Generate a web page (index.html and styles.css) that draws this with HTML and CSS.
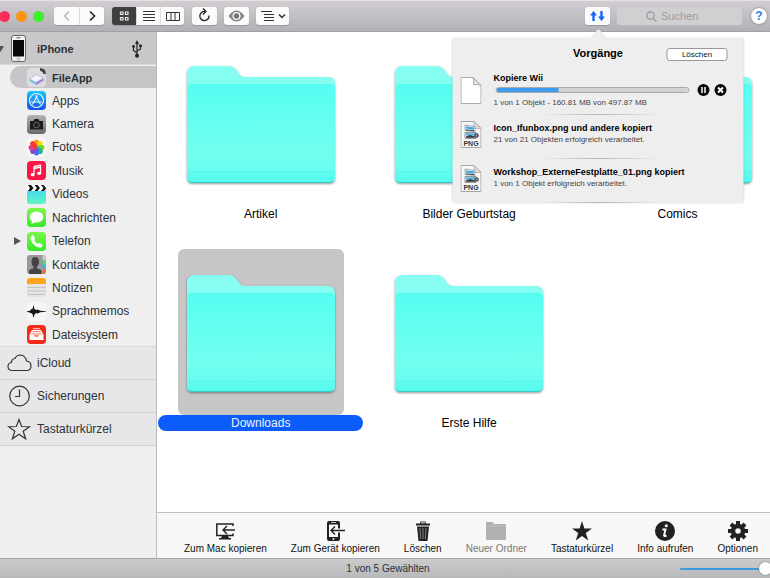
FILE: index.html
```html
<!DOCTYPE html>
<html lang="de">
<head>
<meta charset="utf-8">
<title>iPhone – FileApp</title>
<link rel="stylesheet" href="styles.css">
</head>
<body>
<svg class="defs" aria-hidden="true">
  <defs>
    <linearGradient id="front" x1="0" y1="0" x2="0" y2="1">
      <stop offset="0" stop-color="#55fdf0"/><stop offset=".12" stop-color="#5bfff2"/>
      <stop offset=".7" stop-color="#72fff0"/><stop offset=".88" stop-color="#66fdf0"/><stop offset="1" stop-color="#50fbee"/>
    </linearGradient>
    <linearGradient id="blue" x1="0" y1="0" x2="0" y2="1"><stop offset="0" stop-color="#18c8f8"/><stop offset="1" stop-color="#1650f0"/></linearGradient>
    <linearGradient id="gray" x1="0" y1="0" x2="0" y2="1"><stop offset="0" stop-color="#b4b4b6"/><stop offset="1" stop-color="#69696c"/></linearGradient>
    <linearGradient id="green" x1="0" y1="0" x2="0" y2="1"><stop offset="0" stop-color="#7cf84c"/><stop offset="1" stop-color="#35e828"/></linearGradient>
    <linearGradient id="aqua" x1="0" y1="0" x2="0" y2="1"><stop offset="0" stop-color="#45dcf0"/><stop offset="1" stop-color="#62f5c0"/></linearGradient>
    <symbol id="folder" viewBox="0 0 148 117">
      <path fill="#86fff2" d="M0 8Q0 0 8 0H42Q47 0 50 5L53 9Q55 11 58 11H141Q148 11 148 18V110Q148 117 142 117H6Q0 117 0 111Z"/>
      <path fill="url(#front)" d="M0 23Q0 18 5 18H143Q148 18 148 23V111Q148 117 142 117H6Q0 117 0 111Z"/>
      <path stroke="#48eee2" stroke-opacity=".5" d="M1 106.5H147"/>
      <path stroke="#38c8c2" fill="none" d="M2 115Q3 116.500 6 116.500H142Q145 116.500 146 115"/>
    </symbol>
    <symbol id="png" viewBox="0 0 21 27">
      <path fill="#f8f8f8" stroke="#a5a5a5" d="M.5.5H13.500L20.500 7.500V26.500H.5Z"/>
      <path fill="#ddd" stroke="#a5a5a5" stroke-width=".7" d="M13.500.5V7.500H20.500Z"/>
      <path fill="#e6f0f6" stroke="#777" stroke-width=".6" d="M4.500 4L14.500 5.500V10.500L4.500 9.500Z"/>
      <path fill="#3f9fe0" d="M5.500 5.500l8 1v2l-8-1z"/>
      <path fill="#274654" d="M5.500 8.500l8 .5v1l-8-.5z"/>
      <path fill="#e6eff4" stroke="#555" stroke-width=".6" d="M4.500 11.500H15.500V17.500H4.500Z"/>
      <path fill="#53aee4" d="M5.500 12.300h9v2.200h-9z"/><path fill="#303a3e" d="M5.500 15.500l4-1.500 5 1.500v1.200h-9z"/>
      <circle cx="16" cy="14.500" r="2.300" fill="#4a4a4a"/><circle cx="16" cy="14.500" r=".9" fill="#aaa"/>
      <text x="10.500" y="25" text-anchor="middle" class="png-tag">PNG</text>
    </symbol>
  </defs>
</svg>

<div class="window">
  <header class="toolbar">
    <div class="lights">
      <button class="light red" aria-label="Schließen"></button>
      <button class="light orange" aria-label="Minimieren"></button>
      <button class="light green" aria-label="Vergrößern"></button>
    </div>
    <div class="group nav">
      <button class="tool" aria-label="Zurück"><svg width="24" height="18" fill="none" stroke="#b5b5b8" stroke-width="1.400"><path d="M14 4.500L9.500 9L14 13.500"/></svg></button>
      <button class="tool" aria-label="Vor"><svg width="24" height="18" fill="none" stroke="#222" stroke-width="1.600"><path d="M10 4.500L14.500 9L10 13.500"/></svg></button>
    </div>
    <div class="group views">
      <button class="tool active" aria-label="Symbole"><svg width="24" height="18" fill="none" stroke="#e8e8e8" stroke-width="1.200"><path d="M8.500 5h2.500v2.500H8.500zM13.500 5H16v2.500H13.500zM8.500 10.500h2.500V13H8.500zM13.500 10.500H16V13H13.500z"/></svg></button>
      <button class="tool" aria-label="Liste"><svg width="24" height="18" stroke="#333"><path d="M6 4.500H18M6 7.500H18M6 10.500H18M6 13.500H18"/></svg></button>
      <button class="tool" aria-label="Spalten"><svg width="24" height="18" fill="none" stroke="#333"><path d="M5.500 5.500H18.500V13.500H5.500ZM10 5.500V13.500M14 5.500V13.500"/></svg></button>
    </div>
    <button class="tool single" aria-label="Neu laden"><svg width="25" height="18" fill="none" stroke="#222" stroke-width="1.300"><path d="M13 4.500A4.600 4.600 0 1 0 17 8.500M11 1.500L14 4.500L11 7.500"/></svg></button>
    <button class="tool single" aria-label="Vorschau"><svg width="25" height="18"><path fill="#858588" d="M4.500 9Q8.500 3.500 12.500 3.500T20.500 9Q16.500 14.500 12.500 14.500T4.500 9Z"/><circle cx="12.500" cy="9" r="4" fill="#fbfbfc"/><circle cx="12.500" cy="9" r="2.700" fill="#77777a"/></svg></button>
    <button class="tool single arrange" aria-label="Anordnen"><svg width="33" height="18" fill="none" stroke="#333"><path d="M5 4.500H16M8 7.500H18M8 10.500H18M8 13.500H18"/><path stroke-width="1.500" d="M23 7.500L26 10.500L29 7.500"/></svg></button>
    <div class="transfers">
      <button class="tool single" aria-label="Vorgänge" aria-expanded="true"><svg width="25" height="18" fill="#1768f2"><path d="M8.500 4L12 8.500H9.700V14H7.300V8.500H5ZM16.500 14L13 9.500H15.300V4H17.700V9.500H20Z"/></svg></button>
      <section class="popover" aria-label="Vorgänge">
        <div class="popover-head">
          <h2>Vorgänge</h2>
          <button class="clear">Löschen</button>
        </div>
        <ul class="tasks">
          <li class="task">
            <svg class="doc" viewBox="0 0 21 27"><path fill="#fff" stroke="#aaa" d="M.5.5H12.500L20.500 8.500V26.500H.5Z"/><path fill="#e5e5e5" stroke="#aaa" d="M12.500.5Q14 4 13 7.500Q17 7 20.500 8.500Z"/></svg>
            <div class="task-text">
              <h3>Kopiere Wii</h3>
              <div class="bar">
                <progress max="497.870" value="160.810" aria-label="Kopiere Wii"></progress>
                <button class="round" aria-label="Anhalten"><svg viewBox="0 0 12 12" stroke="#fff" stroke-width="1.500"><path d="M4.500 3V9M7.500 3V9"/></svg></button>
                <button class="round" aria-label="Abbrechen"><svg viewBox="0 0 12 12" stroke="#fff" stroke-width="2"><path d="M3.500 3.500L8.500 8.500M8.500 3.500L3.500 8.500"/></svg></button>
              </div>
              <p>1 von 1 Objekt - 160.81 MB von 497.87 MB</p>
            </div>
          </li>
          <li class="task">
            <svg class="doc"><use href="#png"/></svg>
            <div class="task-text"><h3>Icon_Ifunbox.png und andere kopiert</h3><p>21 von 21 Objekten erfolgreich verarbeitet.</p></div>
          </li>
          <li class="task">
            <svg class="doc"><use href="#png"/></svg>
            <div class="task-text"><h3>Workshop_ExterneFestplatte_01.png kopiert</h3><p>1 von 1 Objekt erfolgreich verarbeitet.</p></div>
          </li>
        </ul>
      </section>
    </div>
    <label class="search">
      <svg width="11" height="11" fill="none" stroke="#98979b" stroke-width="1.200"><circle cx="4.500" cy="4.500" r="3.700"/><path d="M7.300 7.300L10.500 10.500"/></svg>
      <input type="search" placeholder="Suchen" aria-label="Suchen">
    </label>
    <button class="help" aria-label="Hilfe">?</button>
  </header>

  <div class="body">
    <nav class="sidebar">
      <a class="device" href="#iphone">
        <svg class="caret" width="4" height="6" fill="#555"><path d="M-3 0H4L.5 6Z"/></svg>
        <svg class="phone" width="15" height="27"><rect x=".5" y=".5" width="14" height="26" rx="2.500" fill="#f4f4f4" stroke="#666"/><path fill="#0a0a0a" d="M2 5H13V21.500H2Z"/><path stroke="#555" d="M5.500 2.800H9.500"/><circle cx="7.500" cy="24" r="1.400" fill="#fff" stroke="#888" stroke-width=".7"/></svg>
        <span>iPhone</span>
        <svg class="usb" width="10" height="18" fill="none" stroke="#222" stroke-width="1.200"><path d="M5 3V15M5 13L1.500 10.500V7M5 11L8.500 9V6"/><path fill="#222" stroke="none" d="M5 0L7 4H3ZM7.200 4.500H9.800V7H7.200Z"/><circle cx="1.500" cy="6.500" r="1.400" fill="#222" stroke="none"/><circle cx="5" cy="15.800" r="2" fill="#222" stroke="none"/></svg>
      </a>
      <ul class="apps">
        <li><a class="current" href="#fileapp"><svg class="icon" viewBox="0 0 19 19"><rect width="19" height="19" rx="4" fill="#dedbdd"/><path fill="#74c4ec" d="M2.500 10.500L9 14.500V17L2.500 13Z"/><path fill="#9a7edc" d="M9 14.500L16.500 10V12.500L9 17Z"/><path fill="#f5f2fb" stroke="#9bb4e4" stroke-width=".7" d="M2.500 10.500L9.500 6.500L16.500 10L9 14.500Z"/><path fill="#444" d="M13 0Q19 0 19 6H16.500L15.500 4L13 2.500Z"/></svg>FileApp</a></li>
        <li><a href="#apps"><svg class="icon" viewBox="0 0 19 19"><rect width="19" height="19" rx="4" fill="url(#blue)"/><g fill="none" stroke="#e6f7ff" stroke-width="1.200"><circle cx="9.500" cy="9.500" r="7"/><path d="M10.300 4.500L5.500 13.500M8.700 4.500L13.500 13.500M4 11H15"/></g></svg>Apps</a></li>
        <li><a href="#kamera"><svg class="icon" viewBox="0 0 19 19"><rect width="19" height="19" rx="4" fill="url(#gray)"/><path fill="#1c1c1e" d="M3 6H6.500L7.500 4H11.500L12.500 6H16V14.500H3Z"/><circle cx="9.500" cy="10" r="2.800" fill="none" stroke="#77777a" stroke-width=".8"/></svg>Kamera</a></li>
        <li><a href="#fotos"><svg class="icon" viewBox="0 0 19 19"><rect width="19" height="19" rx="4" fill="#f7f7f7"/><rect x="7" y="1.500" width="5" height="8" rx="2.500" fill="#ff9c12"/><rect x="7" y="1.500" width="5" height="8" rx="2.500" fill="#f0dc10" transform="rotate(45 9.500 9.500)"/><rect x="7" y="1.500" width="5" height="8" rx="2.500" fill="#7cd418" transform="rotate(90 9.500 9.500)"/><rect x="7" y="1.500" width="5" height="8" rx="2.500" fill="#20b890" transform="rotate(135 9.500 9.500)"/><rect x="7" y="1.500" width="5" height="8" rx="2.500" fill="#3478e8" transform="rotate(180 9.500 9.500)"/><rect x="7" y="1.500" width="5" height="8" rx="2.500" fill="#8a48c8" transform="rotate(225 9.500 9.500)"/><rect x="7" y="1.500" width="5" height="8" rx="2.500" fill="#e03888" transform="rotate(270 9.500 9.500)"/><rect x="7" y="1.500" width="5" height="8" rx="2.500" fill="#f8382c" transform="rotate(315 9.500 9.500)"/></svg>Fotos</a></li>
        <li><a href="#musik"><svg class="icon" viewBox="0 0 19 19"><rect width="19" height="19" rx="4" fill="#fb1647"/><path fill="none" stroke="#fff" stroke-width="1.300" d="M7 13.500V5.500L13.500 4V12M7 7.500L13.500 6"/><ellipse cx="5.600" cy="13.700" rx="2" ry="1.600" fill="#fff"/><ellipse cx="12.100" cy="12.300" rx="2" ry="1.600" fill="#fff"/></svg>Musik</a></li>
        <li><a href="#videos"><svg class="icon" viewBox="0 0 19 19"><path fill="url(#aqua)" d="M0 6H19V16Q19 19 16 19H3Q0 19 0 16Z"/><path fill="#fff" d="M0 3Q0 0 3 0H16Q19 0 19 3V6H0Z"/><path fill="#111" d="M1 0H4L6.500 3L4 6H1L3 3ZM7.500 0H10.500L13 3L10.500 6H7.500L10 3ZM14 0H16.500L19 3V4L17 6H14L16.500 3Z"/></svg>Videos</a></li>
        <li><a href="#nachrichten"><svg class="icon" viewBox="0 0 19 19"><rect width="19" height="19" rx="4" fill="url(#green)"/><ellipse cx="9.500" cy="9" rx="6.800" ry="5.600" fill="#fff"/><path fill="#fff" d="M5 12L4.500 16L9 14Z"/></svg>Nachrichten</a></li>
        <li><a href="#telefon"><svg class="expand" width="7" height="8" fill="#555"><path d="M0 0L7 4L0 8Z"/></svg><svg class="icon" viewBox="0 0 19 19"><rect width="19" height="19" rx="4" fill="url(#green)"/><path fill="#fff" d="M5 3.500Q6 2.800 6.800 4L8 6Q8.300 7 7 7.800Q7.500 10 11 12Q12 10.800 13 11.200L15.300 12.800Q16 13.500 15 14.700Q13 16.500 9.500 14.500Q4.500 11.500 3.500 7Q3.200 4.600 5 3.500Z"/></svg>Telefon</a></li>
        <li><a href="#kontakte"><svg class="icon" viewBox="0 0 19 19"><rect width="19" height="19" rx="3" fill="#98989b"/><path fill="#c8c8c8" d="M15.500 0H16Q19 0 19 3V5H15.500Z"/><path fill="#58d86c" d="M15.500 5H19V9.500H15.500Z"/><path fill="#38b8e8" d="M15.500 9.500H19V14H15.500Z"/><path fill="#f07438" d="M15.500 14H19V16Q19 19 16 19H15.500Z"/><path fill="#434345" d="M8 2Q12 2 12 7Q12 10 10 11.500V13.500Q14.500 14.500 14.500 16V19H2V16Q2 14.500 6.500 13.500V11.500Q4.500 10 4.500 7Q4.500 2 8 2Z"/></svg>Kontakte</a></li>
        <li><a href="#notizen"><svg class="icon" viewBox="0 0 19 19"><rect width="19" height="19" rx="3" fill="#e4e4e4"/><path fill="#fca41c" d="M0 6V3Q0 0 3 0H16Q19 0 19 3V6Z"/><path stroke="#c4c4c6" d="M0 9.500H19M0 13H19M1 16.500H18"/></svg>Notizen</a></li>
        <li><a href="#sprachmemos"><svg class="icon" viewBox="0 0 19 19"><rect width="19" height="19" rx="4" fill="#f6f6f6"/><path fill="#151515" d="M0 9.200L3 8.800L4.500 7L5.500 7L6.500 3L7.500 7L9 8L11 7.500L13 8.800L19 9.200V9.800L13 10.200L11 11.500L9 11L7.500 12.500L6.500 16L5.500 12L4 11L0 9.800Z"/></svg>Sprachmemos</a></li>
        <li><a href="#dateisystem"><svg class="icon" viewBox="0 0 19 19"><rect width="19" height="19" rx="4" fill="#f32b18"/><path fill="#fff" d="M5 5H14L16.500 10V15H2.500V10Z"/><path fill="#f58a78" d="M5.700 6H13.300L15.200 10H12Q11.500 12.200 9.500 12.200T7 10H3.800Z"/><path stroke="#fff" stroke-width=".8" d="M5 7.500H14M4.500 9H14.500M6 3.700H13"/></svg>Dateisystem</a></li>
      </ul>
      <ul class="sections">
        <li><a href="#icloud"><svg width="25" height="18" fill="none" stroke="#333" stroke-width="1.200"><path d="M5.500 16.500Q1 16.500 1 12.500Q1 9 4.500 8.500Q4.500 5 8 4.500Q9.500 1 13.500 1Q18.500 1.500 19.500 7Q24 7.500 24 12Q24 16.500 19.500 16.500Z"/></svg>iCloud</a></li>
        <li><a href="#sicherungen"><svg width="25" height="22" fill="none" stroke="#333" stroke-width="1.200"><circle cx="12.500" cy="11" r="9.800"/><path d="M12.500 4.500V11.500H8"/></svg>Sicherungen</a></li>
        <li><a href="#kuerzel"><svg width="25" height="22" fill="none" stroke="#333" stroke-width="1.200"><path d="M12 1.500L14.600 8.500L22.500 8.700L16.200 13.300L18.600 20.800L12 16.300L5.400 20.800L7.800 13.300L1.500 8.700L9.400 8.500Z"/></svg>Tastaturkürzel</a></li>
      </ul>
    </nav>

    <main class="content">
      <ul class="files">
        <li class="file"><span class="tile"><svg><use href="#folder"/></svg></span><span class="name">Artikel</span></li>
        <li class="file"><span class="tile"><svg><use href="#folder"/></svg></span><span class="name">Bilder Geburtstag</span></li>
        <li class="file"><span class="tile"><svg><use href="#folder"/></svg></span><span class="name">Comics</span></li>
        <li class="file selected"><span class="tile"><svg><use href="#folder"/></svg></span><span class="name">Downloads</span></li>
        <li class="file"><span class="tile"><svg><use href="#folder"/></svg></span><span class="name">Erste Hilfe</span></li>
      </ul>
      <div class="actions">
        <button class="action"><svg viewBox="0 0 20 20"><path fill="none" stroke="#222" stroke-width="1.500" d="M18 5V3H1.800V14.500H18V12.500"/><path fill="#222" d="M7 15H13L14 17H16V18.500H4V17H6Z"/><path fill="none" stroke="#222" stroke-width="1.400" d="M20 9H8M12 5L8 9L12 13"/></svg>Zum Mac kopieren</button>
        <button class="action"><svg viewBox="0 0 20 20"><path fill="#222" fill-rule="evenodd" d="M4 0H13Q15 0 15 2V7.500H13V3.500H4V16H13V11.500H15V18Q15 20 13 20H4Q2 20 2 18V2Q2 0 4 0ZM6 1.300V2H11V1.300ZM8.500 17A1 1 0 1 0 8.500 19A1 1 0 1 0 8.500 17Z"/><path fill="none" stroke="#222" stroke-width="1.400" d="M20 9.500H6M10 5.500L6 9.500L10 13.500"/></svg>Zum Gerät kopieren</button>
        <button class="action"><svg viewBox="0 0 20 20"><path fill="#222" d="M3 2.500H7L7.500.5H12.500L13 2.500H17V4.500H3ZM4 5.500H16L14.500 20H5.500Z"/><path stroke="#999" stroke-width=".8" d="M7 7L7.600 18M10 7V18M13 7L12.400 18"/><path stroke="#eee" d="M8 1.800H12"/></svg>Löschen</button>
        <button class="action" disabled><svg viewBox="0 0 20 20"><path fill="#b0b0b0" d="M0 2Q0 1 1 1H6.500L8 3H19Q20 3 20 4V18Q20 19 19 19H1Q0 19 0 18Z"/><path stroke="#ccc" stroke-width=".6" d="M0 5H20"/></svg>Neuer Ordner</button>
        <button class="action"><svg viewBox="0 0 20 20"><path fill="#222" d="M10 0L12.400 7.500H20L13.800 12L16.200 19.500L10 15L3.800 19.500L6.200 12L0 7.500H7.600Z"/></svg>Tastaturkürzel</button>
        <button class="action"><svg viewBox="0 0 20 20"><circle cx="10" cy="10" r="10" fill="#222"/><circle cx="11.300" cy="4.800" r="1.500" fill="#fff"/><path fill="none" stroke="#fff" stroke-width="1.900" d="M7.500 8.500H10.500L9 14.500Q9 15.500 11.500 14.500"/></svg>Info aufrufen</button>
        <button class="action"><svg viewBox="0 0 20 20"><g stroke="#222" stroke-width="4"><path d="M10 0V4M10 16V20M0 10H4M16 10H20M3 3L6 6M14 14L17 17M3 17L6 14M14 6L17 3"/></g><circle cx="10" cy="10" r="5" fill="none" stroke="#222" stroke-width="4.500"/></svg>Optionen</button>
      </div>
    </main>
  </div>

  <footer class="status">
    <span class="count">1 von 5 Gewählten</span>
    <input class="zoom" type="range" min="0" max="100" value="100" aria-label="Symbolgröße">
  </footer>
</div>
</body>
</html>
```
FILE: styles.css
```css
* { box-sizing: border-box; }

body {
  margin: 0;
  overflow: hidden;
  font-family: "Liberation Sans", Arial, sans-serif;
  font-size: 12px;
  color: #111;
  background: #fff;
}

ul, h2, h3, p { margin: 0; padding: 0; list-style: none; }
a { color: inherit; text-decoration: none; }
button { margin: 0; padding: 0; border: 0; background: none; font: inherit; color: inherit; }
svg { display: block; flex: none; }

.defs { position: absolute; width: 0; height: 0; }

.window { display: flex; flex-direction: column; min-height: 100vh; }

/* Toolbar */
.toolbar {
  display: flex;
  align-items: center;
  height: 32px;
  padding-right: 3px;
  border-top: 1px solid #e6dfe4;
  border-bottom: 1px solid #a2a0a4;
  background: linear-gradient(#d0ced1, #b3b1b6);
}
.lights { display: flex; gap: 6px; margin-left: -1px; margin-right: 10px; }
.light { width: 11px; height: 11px; border-radius: 50%; }
.red { background: #fb2d58; }
.orange { background: #fd9412; }
.green { background: #3cf02c; }

.group { display: flex; border-radius: 3px; overflow: hidden; box-shadow: 0 1px 1px #99979b; }
.group .tool + .tool { border-left: 1px solid #dcdcde; }
.tool { display: flex; justify-content: center; width: 24px; height: 18px; background: #fbfbfc; overflow: hidden; }
.nav { margin-right: 8px; }
.nav .tool { width: 25px; }
.views { margin-right: 8px; }
.views .tool { width: 24px; }
.tool.active { background: #3f3f42; }
.single { width: 25px; margin-right: 7px; border-radius: 3px; box-shadow: 0 1px 1px #99979b; }
.arrange { width: 33px; }

.transfers { position: relative; margin-left: auto; }

.search {
  display: flex;
  align-items: center;
  gap: 4px;
  width: 125px;
  height: 18px;
  margin-right: 9px;
  padding-left: 29px;
  border-radius: 3px;
  background: #d0cfd2;
}
.search input {
  width: 60px;
  padding: 0;
  border: 0;
  outline: 0;
  background: none;
  font: 11px "Liberation Sans", Arial, sans-serif;
}
.search input::placeholder { color: #9c9b9f; }
.help {
  width: 16px;
  height: 16px;
  border-radius: 50%;
  background: #fff;
  box-shadow: 0 0 2px #666;
  color: #2680e8;
  font-size: 12px;
  font-weight: bold;
  line-height: 16px;
}

/* Transfers popover */
.popover {
  position: absolute;
  z-index: 2;
  top: 31px;
  left: calc(50% - 3px);
  width: 291px;
  transform: translateX(-50%);
  padding-top: 8px;
  border-radius: 4px;
  background: #eeeeef;
  box-shadow: 0 0 2px rgba(0, 0, 0, .15);
}
.popover::before {
  content: "";
  position: absolute;
  bottom: 100%;
  left: 50%;
  margin-left: -9px;
  border: 9px solid transparent;
  border-top: 0;
  border-bottom-color: #eeeeef;
}
.popover-head {
  display: grid;
  grid-template-columns: 1fr auto 1fr;
  align-items: start;
  height: 25px;
  padding: 0 16px;
}
.popover-head h2 { grid-column: 2; font-size: 11px; line-height: 14px; color: #000; }
.clear {
  justify-self: end;
  width: 61px;
  height: 13px;
  margin-top: 2px;
  border: 1px solid #999;
  border-radius: 3px;
  background: #fff;
  font-size: 8px;
  line-height: 11px;
}
.task {
  display: flex;
  align-items: center;
  gap: 12px;
  height: 44px;
  padding: 0 17px 6px 8px;
  background: linear-gradient(90deg, transparent 30%, #b4b4b4 50%, transparent 72%) bottom / 100% 1px no-repeat;
}
.doc { width: 21px; height: 27px; }
.png-tag { font-size: 7px; font-weight: bold; fill: #333; }
.task-text { flex: 1; white-space: nowrap; }
.task h3 { font-size: 9px; line-height: 12px; color: #000; }
.task p { font-size: 8px; line-height: 12px; color: #444; }
.bar { display: flex; align-items: center; gap: 5px; height: 13px; padding-left: 2px; }
progress {
  appearance: none;
  flex: 1;
  width: 0;
  height: 6px;
  margin-right: 3px;
  border: 1px solid #aaa;
  border-radius: 3px;
  background: #d2d2d4;
  overflow: hidden;
}
progress::-webkit-progress-bar { background: #d2d2d4; }
progress::-webkit-progress-value { background: #3e9cf0; }
.round { width: 12px; height: 12px; border-radius: 50%; background: #080808; }

/* Body */
.body { display: flex; flex: 1; min-height: 0; }

.sidebar {
  display: flex;
  flex-direction: column;
  flex: none;
  width: 157px;
  border-right: 1px solid #bcbcbe;
  background: #efeff0;
  color: #2b3236;
}
.device {
  display: flex;
  align-items: center;
  height: 33px;
  padding-top: 1px;
  background: #c8c8ca;
  border-bottom: 1px solid #d8d8da;
  font-size: 11px;
  font-weight: bold;
}
.phone { margin: 0 11px 0 7px; }
.usb { margin: 0 14px 0 auto; }

.apps { display: grid; grid-auto-rows: 1fr; height: 281px; padding-left: 10px; }
.apps li { display: grid; }
.apps a { position: relative; display: flex; align-items: center; gap: 6px; padding: 1px 0 0 17px; }
.icon { width: 19px; height: 19px; }
.expand { position: absolute; left: 4px; top: 8px; }
.apps .current { margin-top: 1px; border-radius: 11px 0 0 11px; background: #c6c6c8; font-size: 11px; font-weight: bold; }

.sections { border-top: 1px solid #dcdcde; background: #e7e7e9; }
.sections a { display: flex; align-items: center; gap: 5px; height: 33px; padding-left: 7px; border-bottom: 1px solid #d2d2d4; }

.content { display: flex; flex: 1; flex-direction: column; min-width: 0; overflow: hidden; background: #fff; }
.files {
  display: grid;
  grid-template-columns: repeat(3, 34%);
  align-content: start;
  flex: 1;
  row-gap: 27px;
  padding-top: 8px;
}
.file { display: flex; flex-direction: column; align-items: center; padding: 0 2px 0 1px; }
.tile { display: flex; align-items: center; justify-content: center; width: 166px; height: 166px; padding-top: 2px; border-radius: 6px; }
.tile svg { width: 148px; height: 117px; filter: drop-shadow(0 1px 1px rgba(0, 0, 0, .4)); }
.name { align-self: stretch; height: 16px; border-radius: 8px; line-height: 17px; text-align: center; color: #000; }
.selected .tile { background: #c6c6c6; }
.selected .name { background: #0c5cfb; color: #eaf4ff; }

.actions {
  display: flex;
  justify-content: space-between;
  height: 46px;
  padding: 8px 12px 0 27px;
  border-top: 1px solid #c2c2c4;
  background: #f8f8f8;
}
.action { display: flex; flex-direction: column; align-items: center; gap: 2px; font-size: 10px; line-height: 12px; white-space: nowrap; }
.action svg { width: 20px; height: 20px; }
.action:disabled { color: #777; }

.status {
  display: grid;
  grid-template-columns: 1fr auto 1fr;
  align-items: center;
  height: 20px;
  padding-left: 6px;
  border-top: 1px solid #a6a6a8;
  background: linear-gradient(#cbcbcc, #b9b9bb);
  font-size: 10px;
  color: #2c3436;
}
.count { grid-column: 2; }
.zoom { appearance: none; justify-self: end; width: 92px; height: 14px; margin: 0 -2px 0 0; background: none; }
.zoom::-webkit-slider-runnable-track { height: 2px; border-radius: 1px; background: #3e98dc; }
.zoom::-webkit-slider-thumb { appearance: none; width: 13px; height: 13px; margin-top: -6px; border-radius: 50%; background: #fff; box-shadow: 0 0 2px #666; }
```
